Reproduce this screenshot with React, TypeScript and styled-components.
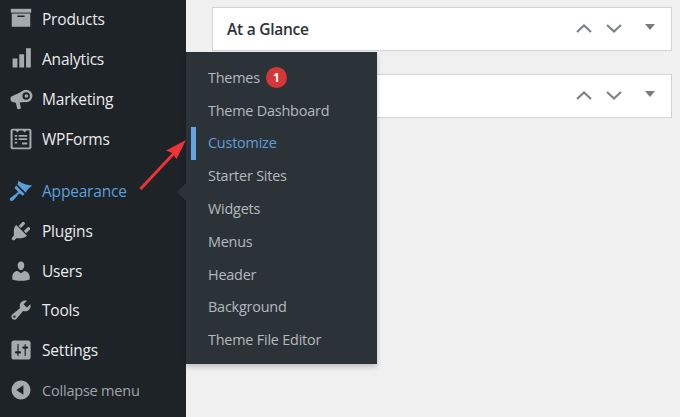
import React from "react";
import styled, { createGlobalStyle } from "styled-components";

const Global = createGlobalStyle`
  html, body { margin: 0; padding: 0; background: #f0f0f1; }
  body { width: 680px; height: 417px; overflow: hidden; font-family: "Open Sans", "Noto Sans", sans-serif; }
  * { box-sizing: border-box; }
`;

const Page = styled.div`
  position: relative;
  display: flex;
  width: 680px;
  height: 417px;
  overflow: hidden;
`;

const Sidebar = styled.nav`
  flex: 0 0 186px;
  background: #1d2327;
  display: flex;
  flex-direction: column;
`;

const MenuRow = styled.div<{ $active?: boolean; $gap?: boolean; $muted?: boolean }>`
  display: flex;
  align-items: center;
  height: 39.8px;
  padding-left: 9px;
  gap: 9px;
  margin-top: ${(p) => (p.$gap ? "12.5px" : "0")};
  color: ${(p) => (p.$active ? "#5a9fdc" : p.$muted ? "#a0a5aa" : "#e9ebec")};
  font-size: ${(p) => (p.$muted ? "14.5px" : "15.5px")};
  letter-spacing: -0.2px;
  white-space: nowrap;
  &:first-child { margin-top: -0.5px; }
  svg { flex: 0 0 24px; color: ${(p) => (p.$active ? "#5a9fdc" : "#a7aaad")}; }
`;

const Main = styled.main`
  flex: 1;
  padding: 7px 8px 0 26px;
  display: flex;
  flex-direction: column;
  gap: 23px;
`;

const Card = styled.section`
  height: 44px;
  background: #fff;
  border: 1px solid #d2d3d5;
  display: flex;
  align-items: center;
  padding: 0 16px 0 14px;
  color: #2c3338;
`;

const CardTitle = styled.h2`
  margin: 0 auto 0 0;
  font-size: 15.5px;
  font-weight: 600;
  letter-spacing: -0.25px;
`;

const Handles = styled.div`
  display: flex;
  align-items: center;
  gap: 14px;
  color: #7d8387;
  margin-bottom: 2px;
`;

const Caret = styled.div`
  width: 0;
  height: 0;
  margin-left: 9px;
  margin-bottom: 3px;
  border-left: 5px solid transparent;
  border-right: 5px solid transparent;
  border-top: 6px solid #787c82;
`;

const Flyout = styled.div`
  position: absolute;
  left: 186px;
  top: 52px;
  width: 191px;
  height: 312px;
  background: #2c3338;
  box-shadow: 0 3px 5px rgba(0, 0, 0, 0.2);
  padding-top: 9px;
  display: flex;
  flex-direction: column;
`;

const Pointer = styled.div`
  position: absolute;
  left: -9px;
  top: 131px;
  width: 0;
  height: 0;
  border-top: 9px solid transparent;
  border-bottom: 9px solid transparent;
  border-right: 9px solid #2c3338;
`;

const FlyItem = styled.div<{ $current?: boolean }>`
  position: relative;
  display: flex;
  align-items: center;
  gap: 6px;
  height: 32.8px;
  padding-left: 22px;
  font-size: 14.4px;
  letter-spacing: -0.2px;
  white-space: nowrap;
  color: ${(p) => (p.$current ? "#5f9fd6" : "#b4b9be")};
  ${(p) =>
    p.$current &&
    `&::before {
      content: "";
      position: absolute;
      left: 5px;
      top: 0;
      width: 5px;
      height: 33px;
      background: #62a6e3;
    }`}
`;

const Badge = styled.span`
  display: inline-flex;
  align-items: center;
  justify-content: center;
  width: 21px;
  height: 21px;
  border-radius: 50%;
  background: #d63638;
  color: #fff;
  font-size: 12px;
  font-weight: 700;
  letter-spacing: 0;
`;

const ArrowOverlay = styled.svg`
  position: absolute;
  left: 130px;
  top: 130px;
  pointer-events: none;
`;

const Icon = ({ d, children }: { d?: string; children?: React.ReactNode }) => (
  <svg width="24" height="24" viewBox="0 0 20 20" fill="currentColor">
    {d ? <path d={d} /> : children}
  </svg>
);

const Chevron = ({ up }: { up?: boolean }) => (
  <svg width="16" height="9" viewBox="0 0 16 9" fill="none" stroke="currentColor" strokeWidth="2.2">
    <path d={up ? "M1 8l7-6.5L15 8" : "M1 1l7 6.5L15 1"} />
  </svg>
);

const CardControls = () => (
  <Handles>
    <Chevron up />
    <Chevron />
    <Caret />
  </Handles>
);

const icons = {
  products: (
    <Icon>
      <path d="M1.500 1.500h17v3.200h-17z" />
      <path fillRule="evenodd" d="M2.300 5.500h15.400v11H2.300zM7 7v1.300h6V7z" />
    </Icon>
  ),
  analytics: (
    <Icon>
      <path d="M3 9.500h4V17H3zM8.600 6h4v11h-4zM14.200 1h4v16h-4z" />
    </Icon>
  ),
  marketing: (
    <Icon>
      <path d="M13.500 2.500L2.500 7.800C1.300 8.400 1 9.300 1.300 10.500 1.500 12 2.500 12.800 4 12.800l1.700.3L6.800 18c.1.500.5.700 1 .6l1.500-.4c.5-.1.700-.5.6-1L8.900 13l5-.5z" />
      <circle cx="14.300" cy="7.500" r="5.200" />
      <circle cx="14.300" cy="7.500" r="3.100" fill="#1d2327" />
      <circle cx="14.500" cy="7.500" r="1.500" />
    </Icon>
  ),
  wpforms: (
    <Icon>
      <path
        fillRule="evenodd"
        d="M3 1.500h14c1 0 1.700.7 1.700 1.700v13.600c0 1-.7 1.700-1.700 1.700H3c-1 0-1.700-.7-1.700-1.700V3.200C1.300 2.200 2 1.500 3 1.500zM3 3v14h14V3h-2.400l-1.600 1.500L11.500 3h-3L7 4.500 5.400 3zM4.800 6.600h2v1.500h-2zM8 6.600h7.200v1.500H8zM4.800 9.400h2v1.500h-2zM8 9.400h7.200v1.500H8zM10.800 13h4.400v1.600h-4.400zM4.800 12.200h2v1.500h-2z"
      />
    </Icon>
  ),
  appearance: (
    <Icon>
      <path d="M8 1.500C10 3 13 5 19.500 5.500 17 7 15 9 14 11.500L7 4.500z" />
      <path d="M6 5.500l7 7-1.500 1.500-2-1.500c-.5-.4-1-.4-1.400 0L3.500 18c-.8.7-2 .4-2.500-.2-.5-.7-.4-1.500.2-2L7 11.500c.5-.5.5-1 0-1.500L4.600 7.500z" />
    </Icon>
  ),
  plugins: (
    <Icon d="M13.110 4.360L9.870 7.600 8 5.730l3.240-3.240c.35-.34 1.050-.2 1.560.32.52.51.66 1.210.31 1.550zm-8 1.770l.91-1.120 9.010 9.010-1.190.84c-.71.71-2.630 1.160-3.820 1.160H6.140L4.900 17.260c-.59.59-1.540.59-2.120 0-.59-.58-.59-1.530 0-2.120l1.240-1.240v-3.880c0-1.130.4-3.190 1.090-3.890zm7.260 3.970l3.240-3.240c.34-.35 1.040-.21 1.550.31.52.51.66 1.210.31 1.550l-3.240 3.250z" />
  ),
  users: (
    <Icon d="M10 9.250c-2.270 0-2.730-3.440-2.730-3.440C7 4.020 7.820 2 9.970 2c2.160 0 2.980 2.020 2.710 3.810 0 0-.41 3.440-2.680 3.440zm0 2.570L12.720 10c2.390 0 4.520 2.330 4.520 4.530v2.490s-3.650 1.130-7.240 1.130c-3.650 0-7.240-1.130-7.240-1.130v-2.490c0-2.250 1.940-4.480 4.470-4.480z" />
  ),
  tools: (
    <Icon d="M16.680 9.770c-1.340 1.340-3.300 1.670-4.950.99l-5.410 6.520c-.99.99-2.590.99-3.580 0s-.99-2.590 0-3.570l6.520-5.420c-.68-1.650-.35-3.610.99-4.950 1.280-1.280 3.120-1.620 4.720-1.060l-2.890 2.890 2.820 2.820 2.860-2.870c.53 1.580.18 3.390-1.080 4.650zM3.810 16.210c.4.39 1.040.39 1.430 0 .4-.4.4-1.040 0-1.430-.39-.4-1.030-.4-1.430 0-.39.39-.39 1.030 0 1.430z" />
  ),
  settings: (
    <Icon d="M18 16V4c0-1.100-.9-2-2-2H4c-1.100 0-2 .9-2 2v12c0 1.100.9 2 2 2h12c1.100 0 2-.9 2-2zM8 11h1c.55 0 1 .45 1 1s-.45 1-1 1H8v1.500c0 .28-.22.5-.5.5s-.5-.22-.5-.5V13H6c-.55 0-1-.45-1-1s.45-1 1-1h1V5.500c0-.28.22-.5.5-.5s.5.22.5.5V11zm5-2h-1c-.55 0-1-.45-1-1s.45-1 1-1h1V5.500c0-.28.22-.5.5-.5s.5.22.5.5V7h1c.55 0 1 .45 1 1s-.45 1-1 1h-1v5.500c0 .28-.22.5-.5.5s-.5-.22-.5-.5V9z" />
  ),
  collapse: (
    <Icon d="M10 2.160c4.330 0 7.840 3.510 7.840 7.840s-3.510 7.840-7.840 7.840S2.160 14.330 2.160 10 5.710 2.160 10 2.160zm2 11.720V6.120L6.180 9.970z" />
  ),
};

const flyItems = [
  "Themes",
  "Theme Dashboard",
  "Customize",
  "Starter Sites",
  "Widgets",
  "Menus",
  "Header",
  "Background",
  "Theme File Editor",
];

export default function App() {
  return (
    <Page>
      <Global />
      <Sidebar>
        <MenuRow>{icons.products}Products</MenuRow>
        <MenuRow>{icons.analytics}Analytics</MenuRow>
        <MenuRow>{icons.marketing}Marketing</MenuRow>
        <MenuRow>{icons.wpforms}WPForms</MenuRow>
        <MenuRow $gap $active>{icons.appearance}Appearance</MenuRow>
        <MenuRow>{icons.plugins}Plugins</MenuRow>
        <MenuRow>{icons.users}Users</MenuRow>
        <MenuRow>{icons.tools}Tools</MenuRow>
        <MenuRow>{icons.settings}Settings</MenuRow>
        <MenuRow $muted>{icons.collapse}Collapse menu</MenuRow>
      </Sidebar>
      <Main>
        <Card>
          <CardTitle>At a Glance</CardTitle>
          <CardControls />
        </Card>
        <Card>
          <CardTitle />
          <CardControls />
        </Card>
      </Main>
      <Flyout>
        <Pointer />
        {flyItems.map((item) => (
          <FlyItem key={item} $current={item === "Customize"}>
            {item}
            {item === "Themes" && <Badge>1</Badge>}
          </FlyItem>
        ))}
      </Flyout>
      <ArrowOverlay width="60" height="65" viewBox="0 0 60 65">
        <path d="M10.500 59L47 20" stroke="#ee3338" strokeWidth="3" fill="none" />
        <path d="M56 10L36 20.500 42 23 46.500 29z" fill="#ee3338" />
      </ArrowOverlay>
    </Page>
  );
}
